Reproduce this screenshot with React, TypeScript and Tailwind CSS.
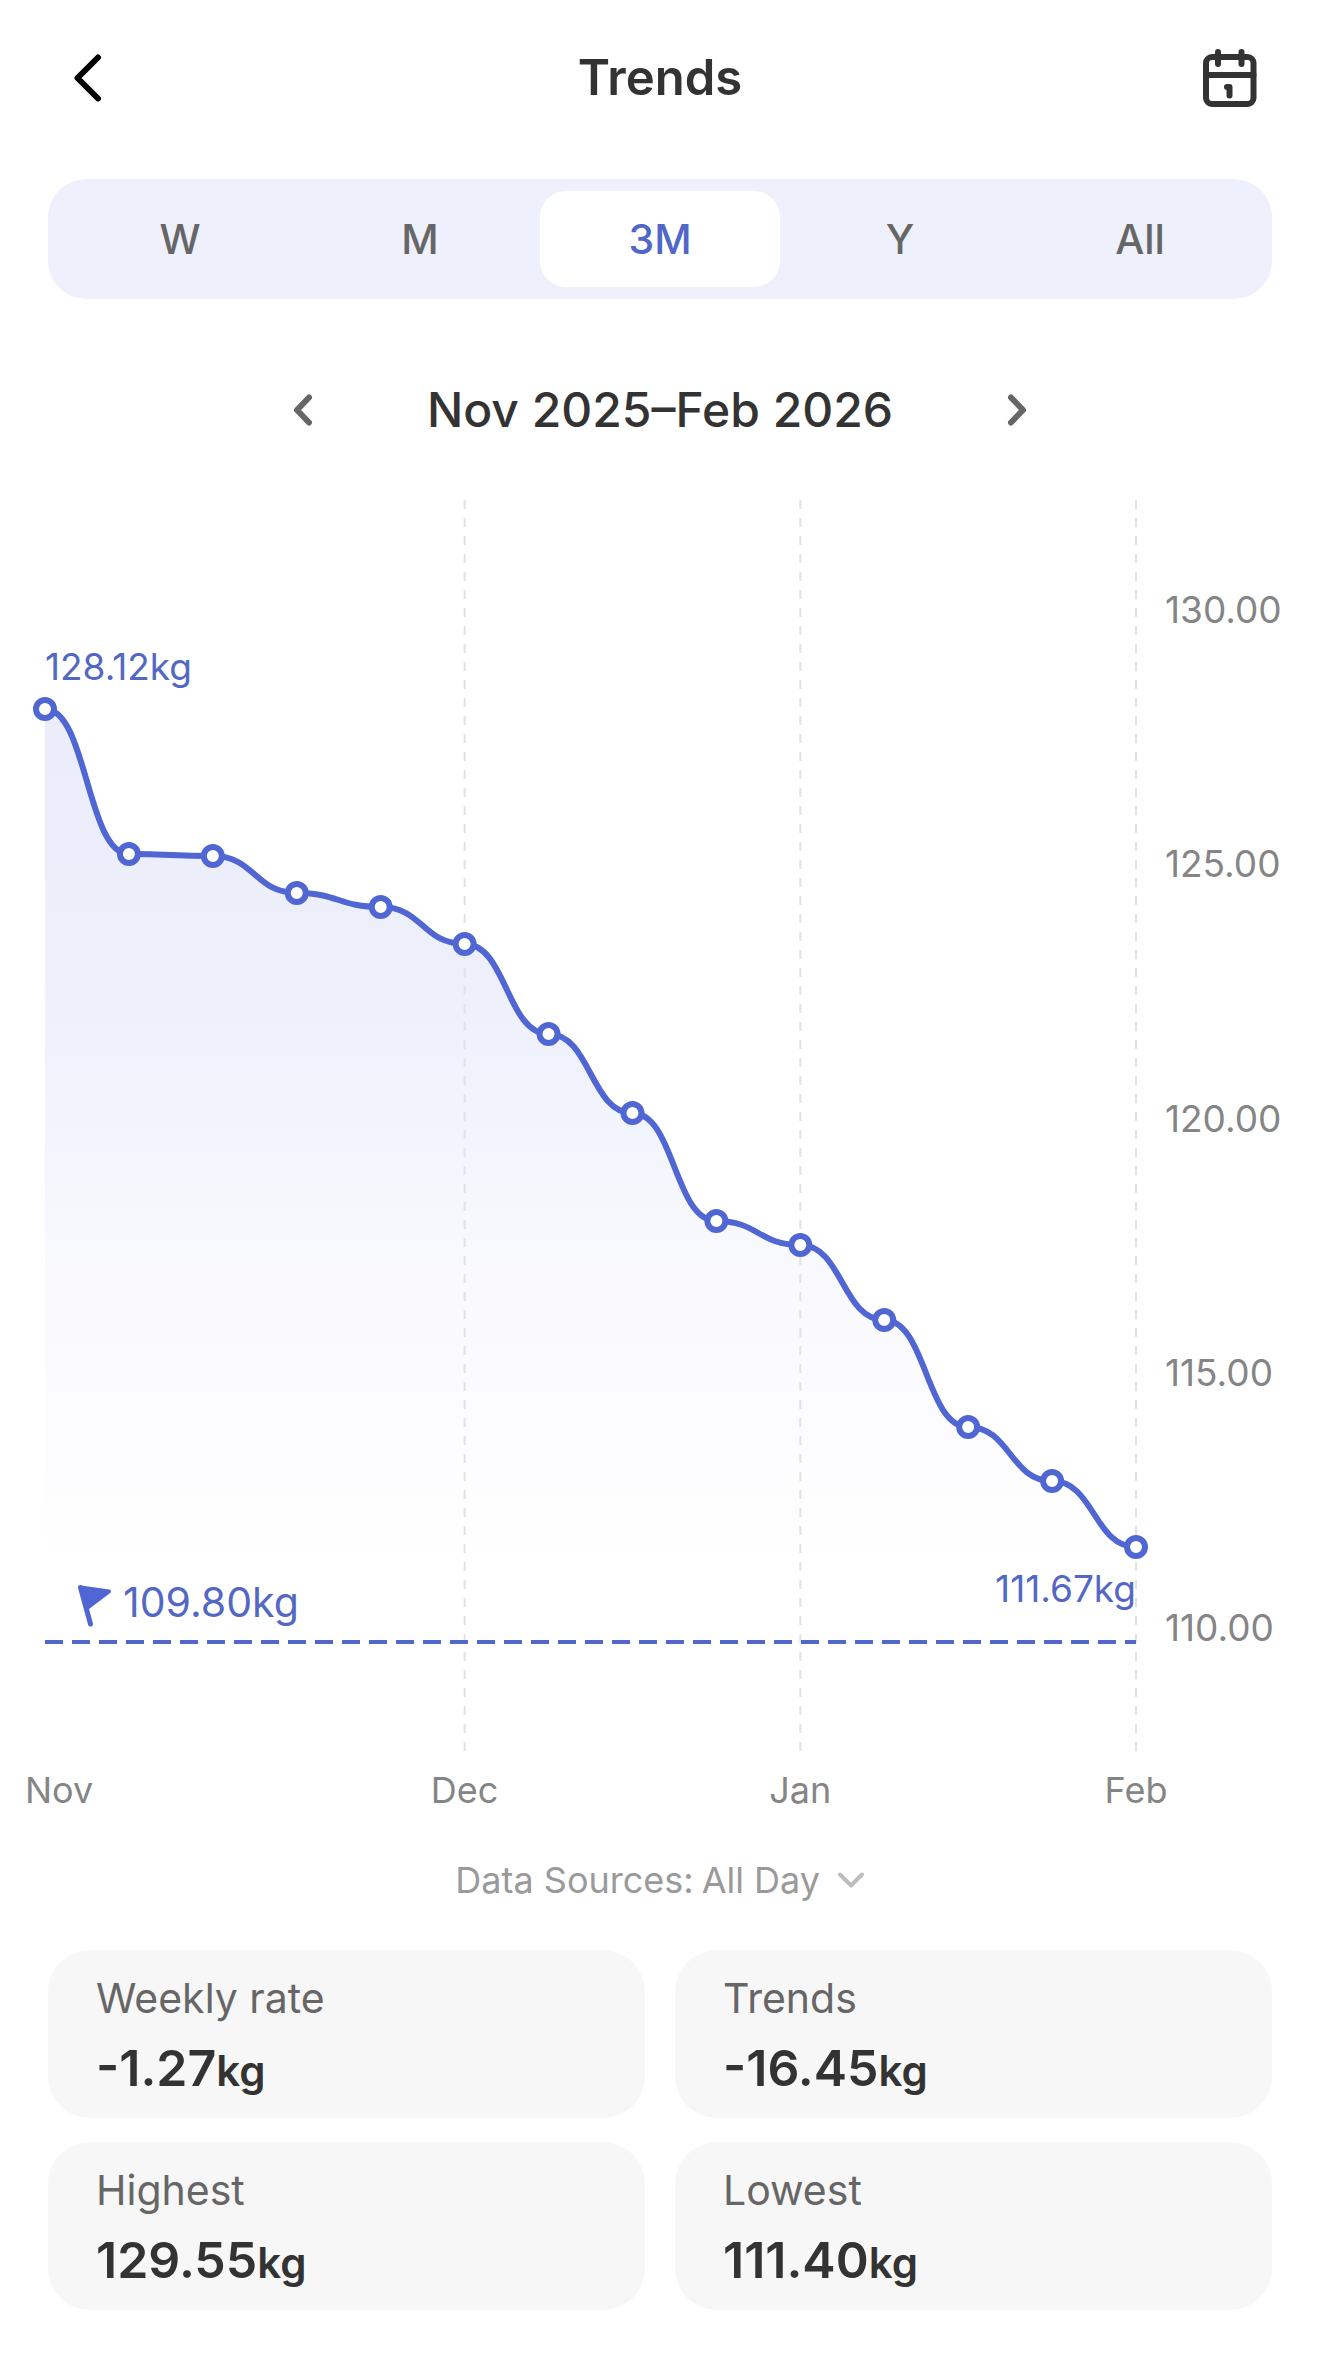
import { useState } from "react";

const RANGES = ["W", "M", "3M", "Y", "All"];

const STATS = [
  { label: "Weekly rate", value: "-1.27" },
  { label: "Trends", value: "-16.45" },
  { label: "Highest", value: "129.55" },
  { label: "Lowest", value: "111.40" },
];

// chart space is 1320 units wide, one week every (RIGHT - LEFT) / 13
const LEFT = 45;
const RIGHT = 1136;
const TOP = 12;
const BOTTOM = 1263;
const GOAL_Y = 1154;
const WEEK_Y = [221, 366, 368, 405, 419, 456, 546, 625, 733, 757, 832, 939, 993, 1059];
const POINTS = WEEK_Y.map((y, i) => ({ x: LEFT + ((RIGHT - LEFT) / 13) * i, y }));

const Y_TICKS = [
  { label: "130.00", y: 122 },
  { label: "125.00", y: 376 },
  { label: "120.00", y: 631 },
  { label: "115.00", y: 885 },
  { label: "110.00", y: 1140 },
];

const MONTHS = [
  { label: "Dec", x: POINTS[5].x },
  { label: "Jan", x: POINTS[9].x },
  { label: "Feb", x: POINTS[13].x },
];

function smoothPath() {
  let d = `M${POINTS[0].x} ${POINTS[0].y}`;
  for (let i = 1; i < POINTS.length; i++) {
    const a = POINTS[i - 1];
    const b = POINTS[i];
    const mid = (a.x + b.x) / 2;
    d += ` C${mid} ${a.y} ${mid} ${b.y} ${b.x} ${b.y}`;
  }
  return d;
}

function Chevron({ className, d, viewBox, width }: { className: string; d: string; viewBox: string; width: number }) {
  return (
    <svg className={className} viewBox={viewBox} fill="none" stroke="currentColor" strokeWidth={width} strokeLinecap="round" strokeLinejoin="round" aria-hidden="true">
      <path d={d} />
    </svg>
  );
}

function CalendarIcon() {
  return (
    <svg className="h-[60px] w-[54px]" viewBox="0 0 54 60" fill="none" stroke="currentColor" strokeWidth={6} strokeLinecap="round" strokeLinejoin="round" aria-hidden="true">
      <rect x="3" y="9" width="47.5" height="47" rx="6" />
      <path d="M3 27h47.5" />
      <path d="M15 4v12M38.5 4v12" />
      <path d="M24 39h2.5v8.5" />
    </svg>
  );
}

function WeightChart() {
  const line = smoothPath();
  return (
    <svg className="mt-12 h-auto w-full" viewBox="0 0 1320 1342" role="img" aria-label="Weight by week">
      <defs>
        <linearGradient id="fade" gradientUnits="userSpaceOnUse" x1="0" y1="221" x2="0" y2="1090">
          <stop offset="0" stopColor="#ebedfa" />
          <stop offset="0.31" stopColor="#edf0fb" />
          <stop offset="0.45" stopColor="#f1f3fd" />
          <stop offset="0.59" stopColor="#f7f8fd" />
          <stop offset="0.7" stopColor="#fafafe" />
          <stop offset="1" stopColor="#ffffff" />
        </linearGradient>
      </defs>

      <path d={`${line} L${RIGHT} ${GOAL_Y} L${LEFT} ${GOAL_Y} Z`} fill="url(#fade)" />

      {MONTHS.map((m) => (
        <line key={m.label} x1={m.x} x2={m.x} y1={TOP} y2={BOTTOM} stroke="#e2e2e4" strokeWidth={2} strokeDasharray="9 9" />
      ))}
      <line x1={LEFT} x2={RIGHT} y1={GOAL_Y} y2={GOAL_Y} stroke="#5167c9" strokeWidth={4} strokeDasharray="18 9" />

      <path d={line} fill="none" stroke="#5066d3" strokeWidth={6} />
      {POINTS.map((p) => (
        <circle key={p.x} cx={p.x} cy={p.y} r={9} fill="#fff" stroke="#5066d3" strokeWidth={6} />
      ))}

      <g fill="#5368c4" fontSize={37}>
        <text x={45} y={192}>128.12kg</text>
        <text x={RIGHT} y={1114} textAnchor="end">111.67kg</text>
        <text x={123} y={1129} fontSize={41}>109.80kg</text>
      </g>

      {/* goal flag */}
      <path d="M80.5 1099.5 L109 1103.5 L88.5 1119 Z" fill="#5066d3" stroke="#5066d3" strokeWidth={4} strokeLinejoin="round" />
      <path d="M80.5 1099.5 L90.5 1136" stroke="#5066d3" strokeWidth={5} strokeLinecap="round" />

      <g fill="#858585" fontSize={37}>
        {Y_TICKS.map((t) => (
          <text key={t.label} x={1165} y={t.y + 13}>{t.label}</text>
        ))}
      </g>
      <g fill="#858585" fontSize={36}>
        <text x={25} y={1315}>Nov</text>
        {MONTHS.map((m) => (
          <text key={m.label} x={m.x} y={1315} textAnchor="middle">{m.label}</text>
        ))}
      </g>
    </svg>
  );
}

export default function App() {
  const [range, setRange] = useState("3M");

  return (
    <main className="min-h-screen w-full bg-white pb-12 font-['Inter',sans-serif] text-[#333]">
      <header className="grid grid-cols-[1fr_auto_1fr] items-center px-[60px] pt-[42px]">
        <button type="button" aria-label="Back" className="flex h-[72px] w-14 items-center justify-center text-black">
          <Chevron className="h-12 w-7" viewBox="0 0 28 48" d="M24 3.5 3.5 24 24 44.5" width={6} />
        </button>
        <h1 className="text-[49px] leading-[72px] font-semibold">Trends</h1>
        <button type="button" aria-label="Calendar" className="flex w-[60px] justify-center justify-self-end">
          <CalendarIcon />
        </button>
      </header>

      <div role="tablist" aria-label="Range" className="mx-12 mt-[65px] grid grid-cols-5 rounded-[38px] bg-[#eef0fb] p-3">
        {RANGES.map((r) => (
          <button
            key={r}
            type="button"
            role="tab"
            aria-selected={r === range}
            onClick={() => setRange(r)}
            className={
              r === range
                ? "h-24 rounded-[26px] bg-white pt-0.5 text-[41px] font-medium text-[#5066c9]"
                : "h-24 rounded-[26px] pt-0.5 text-[41px] font-medium text-[#666]"
            }
          >
            {r}
          </button>
        ))}
      </div>

      <div className="mt-[81px] flex items-center justify-center gap-28">
        <button type="button" aria-label="Previous period" className="flex h-[60px] w-6 items-center justify-center text-[#666]">
          <Chevron className="h-8 w-5" viewBox="0 0 20 32" d="M16 3.5 4 16 16 28.5" width={6} />
        </button>
        <h2 className="text-[48px] leading-[60px] font-medium">Nov 2025–Feb 2026</h2>
        <button type="button" aria-label="Next period" className="flex h-[60px] w-6 items-center justify-center text-[#666]">
          <Chevron className="h-8 w-5" viewBox="0 0 20 32" d="M4 3.5 16 16 4 28.5" width={6} />
        </button>
      </div>

      <WeightChart />

      <div className="mt-6 flex justify-center text-[36px] leading-[52px] text-[#9a9a9a]">
        <label htmlFor="source" className="mr-2">Data Sources:</label>
        <div className="relative">
          <select id="source" defaultValue="All Day" className="appearance-none bg-transparent pr-11">
            <option>All Day</option>
          </select>
          <Chevron className="pointer-events-none absolute top-1/2 right-0 h-[18px] w-7 -translate-y-1/2 text-[#bdbdbd]" viewBox="0 0 28 18" d="M3 3.5 14 14.5 25 3.5" width={4} />
        </div>
      </div>

      <dl className="mx-12 mt-11 grid grid-cols-2 gap-x-[30px] gap-y-6">
        {STATS.map((s) => (
          <div key={s.label} className="rounded-[42px] bg-[#f7f7f7] px-12 pt-[18px] pb-5">
            <dt className="text-[41px] leading-[60px] text-[#666]">{s.label}</dt>
            <dd className="mt-2.5 text-[50px] leading-[60px] font-semibold">
              {s.value}
              <span className="text-[42px] leading-none">kg</span>
            </dd>
          </div>
        ))}
      </dl>
    </main>
  );
}
